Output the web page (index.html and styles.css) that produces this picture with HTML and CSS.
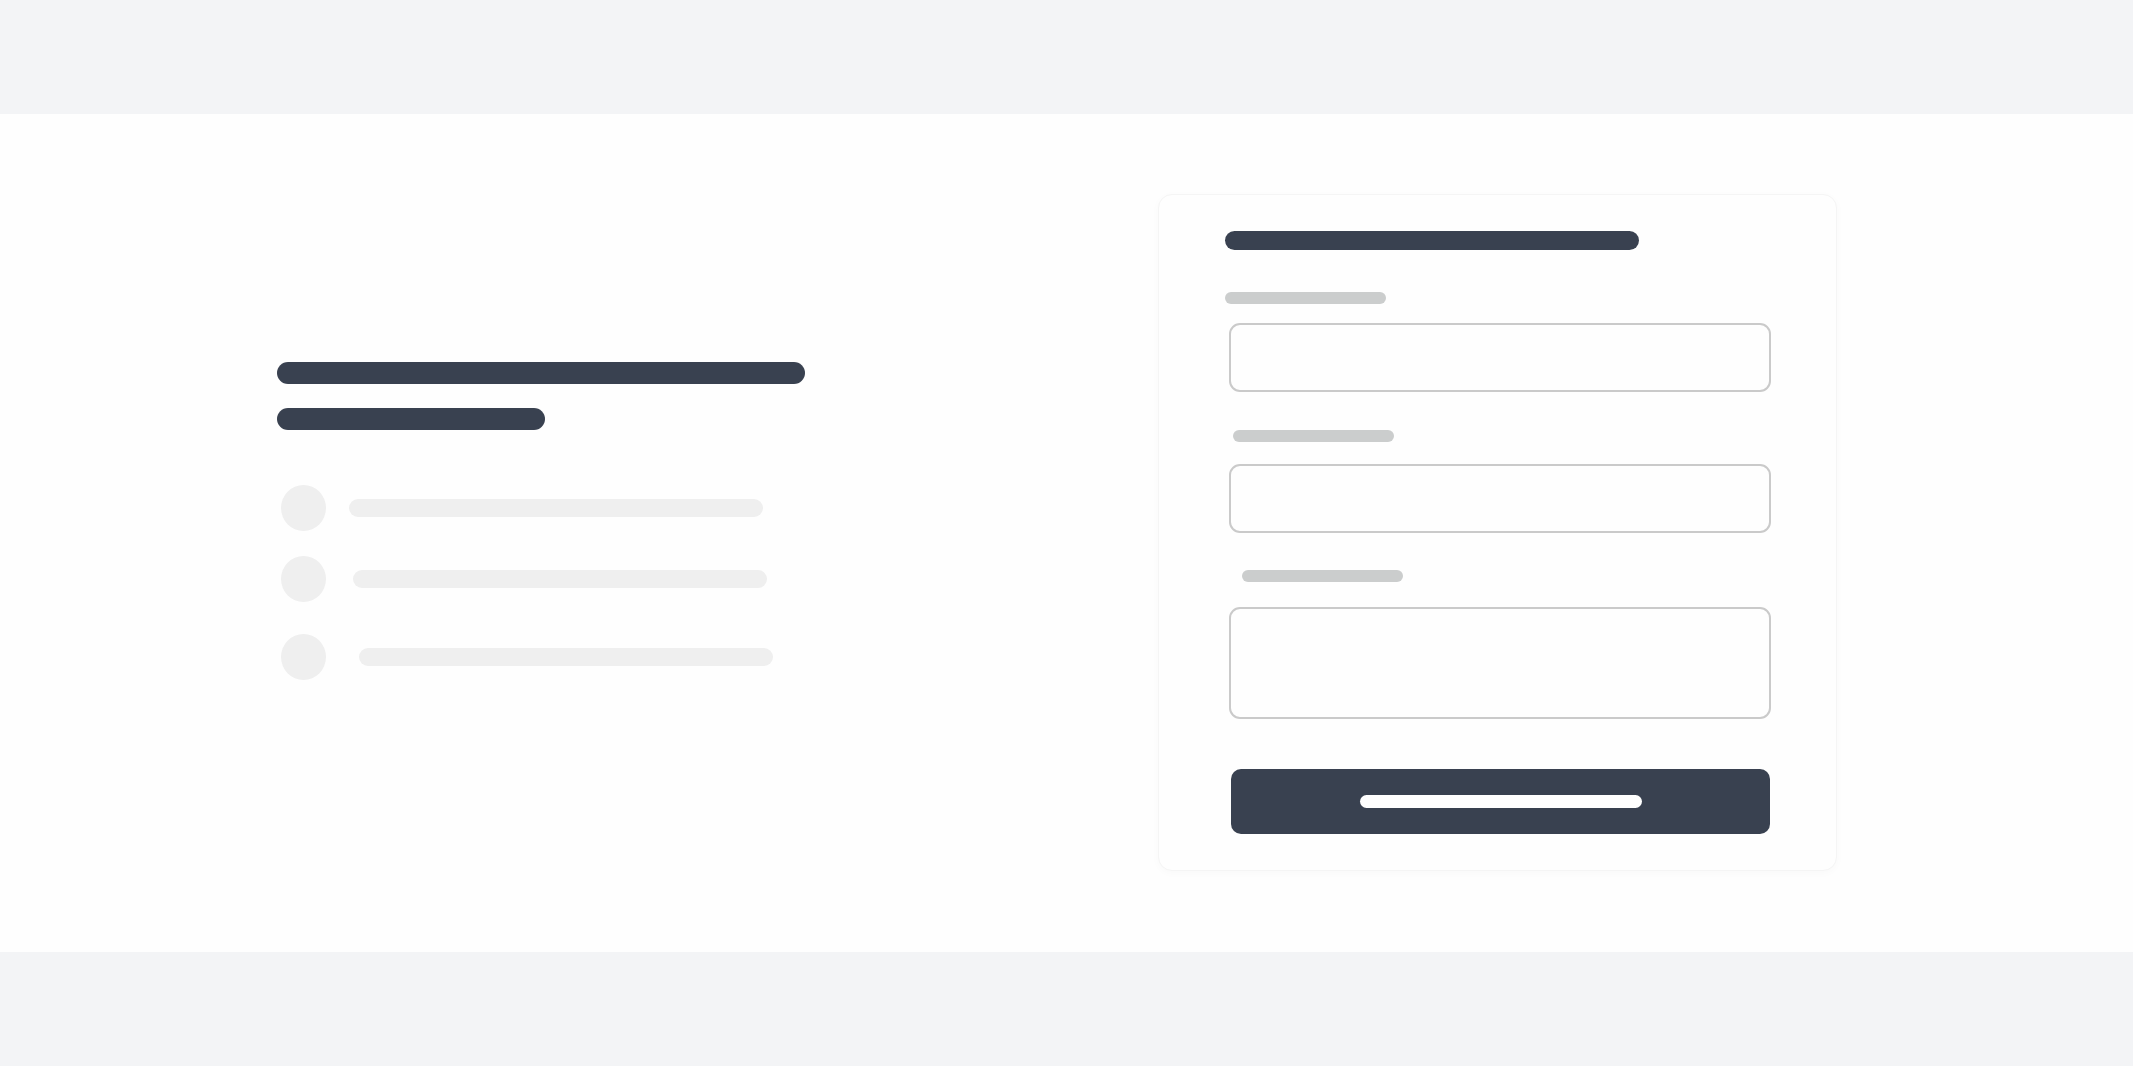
FILE: index.html
```html
<!DOCTYPE html>
<html lang="en">
<head>
    <meta charset="UTF-8">
    <meta name="viewport" content="width=device-width, initial-scale=1.0">
    <title>Contact</title>
    <link rel="stylesheet" href="styles.css">
</head>
<body>
    <header class="band"></header>

    <main class="hero">
        <section class="intro">
            <div class="heading heading-wide"></div>
            <div class="heading heading-short"></div>

            <ul class="points">
                <li class="point">
                    <span class="dot"></span>
                    <span class="line"></span>
                </li>
                <li class="point point-2">
                    <span class="dot"></span>
                    <span class="line"></span>
                </li>
                <li class="point point-3">
                    <span class="dot"></span>
                    <span class="line"></span>
                </li>
            </ul>
        </section>

        <form class="card" id="contactForm">
            <div class="card-title"></div>

            <div class="label"></div>
            <div class="field"></div>

            <div class="label label-2"></div>
            <div class="field"></div>

            <div class="label label-3"></div>
            <div class="field field-area"></div>

            <button type="submit" class="submit"><span class="submit-text"></span></button>
        </form>
    </main>

    <footer class="band"></footer>
</body>
</html>
```

FILE: styles.css
```css
body {
    margin: 0;
    font-family: "Liberation Sans", Arial, sans-serif;
    background-color: #f3f4f6;
}

.band {
    height: 114px;
    background-color: #f3f4f6;
}

.hero {
    height: 838px;
    box-sizing: border-box;
    padding: 0 296px 0 277px;
    display: flex;
    justify-content: space-between;
    align-items: center;
    background-color: #fefefe;
}

/* left column */
.intro {
    width: 528px;
    margin-bottom: 25px;
}

.heading {
    height: 22px;
    border-radius: 11px;
    background-color: #394150;
}

.heading-wide {
    width: 528px;
    margin-bottom: 24px;
}

.heading-short {
    width: 268px;
}

.points {
    list-style: none;
    margin: 55px 0 0;
    padding: 0;
}

.point {
    display: flex;
    align-items: center;
    gap: 23px;
    padding-left: 4px;
}

.point-2 {
    margin-top: 25px;
    gap: 27px;
}

.point-3 {
    margin-top: 32px;
    gap: 33px;
}

.dot {
    width: 45px;
    height: 46px;
    border-radius: 50%;
    background-color: #efefef;
}

.line {
    width: 414px;
    height: 18px;
    border-radius: 9px;
    background-color: #efefef;
}

/* form card */
.card {
    width: 679px;
    height: 677px;
    box-sizing: border-box;
    padding: 36px 65px 35px 66px;
    margin-top: -2px;
    display: flex;
    flex-direction: column;
    border: 1px solid #f5f5f5;
    border-radius: 14px;
    background-color: #fefefe;
    box-shadow: 0 2px 8px rgba(0, 0, 0, 0.025);
}

.card-title {
    width: 414px;
    height: 20px;
    border-radius: 10px;
    background-color: #394150;
}

.label {
    width: 161px;
    height: 12px;
    border-radius: 6px;
    background-color: #cbcdcd;
    margin-top: 42px;
    margin-bottom: 19px;
}

.label-2 {
    margin: 38px 0 22px 8px;
}

.label-3 {
    margin: 37px 0 25px 17px;
}

.field {
    height: 69px;
    box-sizing: border-box;
    margin-left: 4px;
    border: 2.5px solid #cacaca;
    border-radius: 11px;
    background-color: #fefefe;
}

.field-area {
    height: 112px;
}

.submit {
    height: 66px;
    margin: 50px 1px 0 6px;
    padding: 0;
    border: none;
    border-radius: 10px;
    background-color: #394150;
    display: flex;
    align-items: center;
    justify-content: center;
    cursor: pointer;
}

.submit-text {
    width: 282px;
    height: 13px;
    border-radius: 7px;
    background-color: #ffffff;
}
```
